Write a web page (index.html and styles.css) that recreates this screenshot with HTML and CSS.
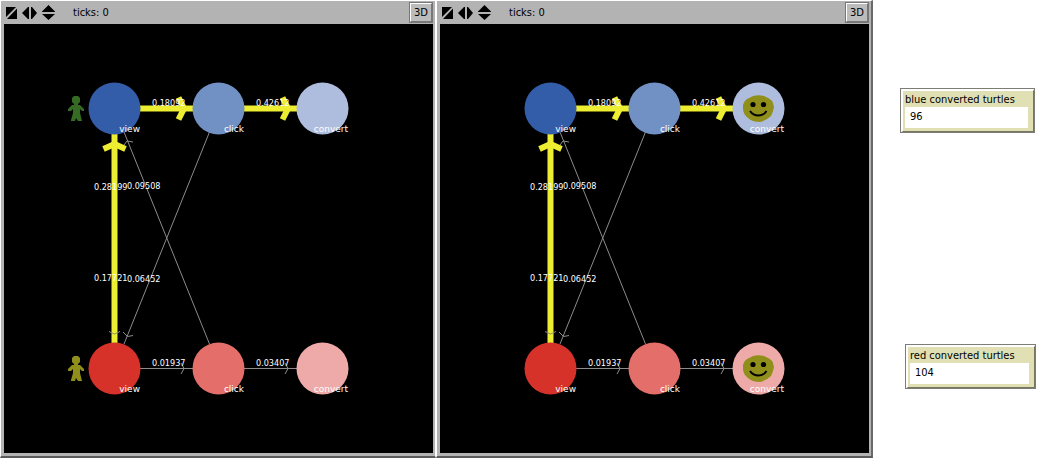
FILE: index.html
```html
<!DOCTYPE html>
<html lang="en">
<head>
<meta charset="utf-8">
<title>Converted turtles</title>
<link rel="stylesheet" href="styles.css">
</head>
<body>
<svg class="defs" aria-hidden="true">
  <symbol id="ico-resize" viewBox="0 0 11 12"><path d="M0 0H10L0 10ZM11 1.500V12H1Z"/></symbol>
  <symbol id="ico-width" viewBox="0 0 15 12"><path d="M7 0V12H6L0 6L6 0ZM9 0V12H10L15 6L10 0Z"/></symbol>
  <symbol id="ico-height" viewBox="0 0 13 15"><path d="M0 6.500L6.500 0L13 6.500V7H0ZM0 9H13L6.500 15Z"/></symbol>
  <symbol id="person" viewBox="0 0 16 26"><path d="M6 0H10L12 2V6L10 8V9H12L16 13V15H14L12 13V17L14 25H10L8 22L7 25H3V24L5 17V13L3 15H0V13L4 9H6V8L4 6V2Z"/></symbol>
  <symbol id="face" viewBox="0 0 31 27">
    <path fill="#908f1b" d="M10 1Q17-1 23 2Q30 4 31 12Q30 17 28 21Q23 26 17 27Q9 27 5 23Q0 19 0 14Q-1 7 4 4Z"/>
    <circle cx="10" cy="9.500" r="2.600"/><circle cx="20.500" cy="9.500" r="2.600"/>
    <path fill="none" stroke="#000" stroke-width="2" d="M7 16Q10 20.500 15.500 20.500Q21 20.500 23.500 16"/>
  </symbol>
  <symbol id="network" viewBox="4 24 429 429">
    <g class="link">
      <path d="M209.500 132L124 344M209.500 344L124 132M140 368.500H193M244 368.500H297"/>
      <path d="M124 145L127 141L133 142M123 332L127.500 336.500L133 335.500M181 363L184 368.500L181 374M285 363L288 368.500L285 374"/>
    </g>
    <g class="strong">
      <path d="M140 108.500H193M244 108.500H297M114.500 134V343"/>
      <path d="M178.500 97.500L184 108.500L178.500 119.500M282.500 97.500L288 108.500L282.500 119.500M103.500 149L114.500 144L125.500 149"/>
    </g>
    <path class="link" d="M109 331.500L114.500 334L120 331.500"/>
    <circle cx="114.500" cy="108.500" r="26" fill="#345da9"/>
    <circle cx="218.500" cy="108.500" r="26" fill="#7190c4"/>
    <circle cx="322.500" cy="108.500" r="26" fill="#aebddd"/>
    <circle cx="114.500" cy="368.500" r="26" fill="#d73229"/>
    <circle cx="218.500" cy="368.500" r="26" fill="#e46e69"/>
    <circle cx="322.500" cy="368.500" r="26" fill="#eeaaa8"/>
  </symbol>
  <symbol id="labels" viewBox="4 24 429 429">
    <g class="weight">
      <text x="152" y="106">0.18092</text><text x="256" y="106">0.42612</text>
      <text x="94" y="190">0.28199</text><text x="127" y="189">0.09508</text>
      <text x="94" y="281">0.17721</text><text x="127" y="282">0.06452</text>
      <text x="152" y="366">0.01937</text><text x="256" y="366">0.03407</text>
    </g>
    <g class="name">
      <text x="140" y="132">view</text><text x="244" y="132">click</text><text x="348" y="132">convert</text>
      <text x="140" y="392">view</text><text x="244" y="392">click</text><text x="348" y="392">convert</text>
    </g>
  </symbol>
</svg>
<main class="workspace">
  <section class="view">
    <header class="bar">
      <svg class="ico-resize"><use href="#ico-resize"/></svg>
      <svg class="ico-width"><use href="#ico-width"/></svg>
      <svg class="ico-height"><use href="#ico-height"/></svg>
      <span class="ticks">ticks: 0</span>
      <button class="mode" type="button">3D</button>
    </header>
    <svg class="world" viewBox="4 24 429 429">
      <use href="#network" x="4" y="24" width="429" height="429"/>
      <use href="#person" x="68" y="96" width="16" height="26" fill="#356b22"/>
      <use href="#person" x="68" y="356" width="16" height="26" fill="#908f1b"/>
      <use href="#labels" x="4" y="24" width="429" height="429"/>
    </svg>
  </section>
  <section class="view last">
    <header class="bar">
      <svg class="ico-resize"><use href="#ico-resize"/></svg>
      <svg class="ico-width"><use href="#ico-width"/></svg>
      <svg class="ico-height"><use href="#ico-height"/></svg>
      <span class="ticks">ticks: 0</span>
      <button class="mode" type="button">3D</button>
    </header>
    <svg class="world" viewBox="4 24 429 429">
      <use href="#network" x="4" y="24" width="429" height="429"/>
      <use href="#face" x="307" y="95" width="31" height="27"/>
      <use href="#face" x="307" y="355" width="31" height="27"/>
      <use href="#labels" x="4" y="24" width="429" height="429"/>
    </svg>
  </section>
  <aside class="monitors">
    <div class="monitor">
      <label for="blue">blue converted turtles</label>
      <output id="blue">96</output>
    </div>
    <div class="monitor red">
      <label for="red">red converted turtles</label>
      <output id="red">104</output>
    </div>
  </aside>
</main>
</body>
</html>
```
FILE: styles.css
```css
* { box-sizing: border-box; }
body {
  margin: 0;
  background: #fff;
  color: #000;
  font: 11px/14px "DejaVu Sans Condensed", "DejaVu Sans", sans-serif;
}
.defs { position: absolute; width: 0; height: 0; }
.workspace {
  display: grid;
  grid-template-columns: 436fr 437fr 172fr;
  align-items: start;
}
.view {
  padding: 0 2px 3px 3px;
  background: #b3b3b3;
  border: solid #fff;
  border-width: 1px 1px 2px 1px;
  border-bottom-color: #5c5a5a;
}
.view.last { border-right: 2px solid #6b6868; }
.bar {
  display: flex;
  align-items: center;
  gap: 5px;
  height: 23px;
  padding-left: 2px;
}
.bar svg { flex: none; display: block; }
.ico-resize { width: 11px; height: 12px; }
.ico-width { width: 15px; height: 12px; }
.ico-height { width: 13px; height: 15px; }
.ticks { margin-left: 13px; }
.mode {
  width: 24px;
  height: 21px;
  margin-left: auto;
  padding: 0;
  border: 2px solid;
  border-color: #fff #777 #777 #fff;
  outline: 1px solid #777;
  outline-offset: -1px;
  background: #bcbcbc;
  color: #000;
  font: 10px/14px "DejaVu Sans", sans-serif;
}
.world { display: block; width: 100%; height: auto; background: #000; }
.link { fill: none; stroke: #8c8c8c; stroke-width: 1; }
.strong { fill: none; stroke: #eded31; stroke-width: 6; }
.weight { fill: #fff; font: 9px "DejaVu Sans Condensed", "DejaVu Sans", sans-serif; }
.name { fill: #fff; font: 9px "DejaVu Sans", sans-serif; text-anchor: end; }
.monitors {
  display: flex;
  flex-direction: column;
  gap: 211px;
  padding: 88px 9px 0 27px;
}
.monitor {
  display: flex;
  flex-direction: column;
  margin-right: 1px;
  padding: 2px 5px 3px 2px;
  border: solid;
  border-width: 3px 2px 2px 3px;
  border-color: #fff #77755d #77755d #fff;
  outline: 1px solid #7d7d78;
  outline-offset: -1px;
  background: #e0e0b4;
}
.monitor.red { margin: 0 0 0 5px; }
.monitor label { white-space: nowrap; }
.monitor output {
  height: 21px;
  padding: 3px 5px;
  background: #fff;
}
```
